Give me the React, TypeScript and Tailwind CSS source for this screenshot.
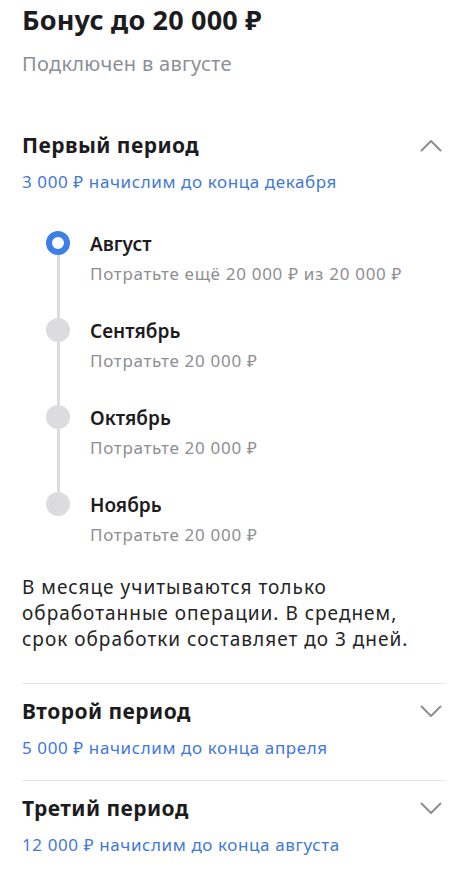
const months = [
  { name: 'Август', note: 'Потратьте ещё 20 000 ₽ из 20 000 ₽', active: true },
  { name: 'Сентябрь', note: 'Потратьте 20 000 ₽', active: false },
  { name: 'Октябрь', note: 'Потратьте 20 000 ₽', active: false },
  { name: 'Ноябрь', note: 'Потратьте 20 000 ₽', active: false },
]

function Chevron({ up }: { up?: boolean }) {
  return (
    <svg width="22" height="13" viewBox="0 0 22 13" fill="none" className="mr-[3px] shrink-0">
      <path
        d={up ? 'M1.5 11.5 11 2l9.5 9.5' : 'M1.5 1.5 11 11l9.5-9.5'}
        stroke="#8e8e93"
        strokeWidth="2"
        strokeLinecap="round"
        strokeLinejoin="round"
      />
    </svg>
  )
}

function PeriodHeader({ title, accrual, open }: { title: string; accrual: string; open?: boolean }) {
  return (
    <div>
      <div className="flex items-center justify-between">
        <h3 className="text-[21px] leading-[28px] font-bold tracking-[0.45px] text-[#1c1c1e]">{title}</h3>
        <Chevron up={open} />
      </div>
      <p className="mt-[12px] text-[17px] leading-[22px] tracking-[0.6px] text-[#3f78dc]">{accrual}</p>
    </div>
  )
}

export default function App() {
  return (
    <div className="min-h-[877px] w-[467px] bg-white px-[22px] pt-[4px] font-['Noto_Sans',sans-serif] antialiased">
      {/* Header */}
      <h1 className="text-[27px] leading-[32px] font-bold tracking-[0.2px] text-[#1c1c1e]">Бонус до 20 000 ₽</h1>
      <p className="mt-[16px] text-[20px] leading-[24px] tracking-[0.3px] text-[#8c8f96]">Подключен в августе</p>

      {/* First period, expanded */}
      <div className="mt-[55px]">
        <PeriodHeader title="Первый период" accrual="3 000 ₽ начислим до конца декабря" open />
      </div>

      <div className="mt-[38px] ml-[24px]">
        {months.map((m, i) => {
          const last = i === months.length - 1
          return (
            <div key={m.name} className="flex">
              <div className="flex w-[24px] shrink-0 flex-col items-center">
                {m.active ? (
                  <div className="h-[24px] w-[24px] rounded-full border-[6px] border-[#3d7fe8] bg-white" />
                ) : (
                  <div className="h-[24px] w-[24px] rounded-full bg-[#dcdce0]" />
                )}
                {!last && <div className="w-[3px] flex-1 bg-[#dcdce0]" />}
              </div>
              <div className={`ml-[20px] pt-[1px] ${last ? '' : 'pb-[33px]'}`}>
                <p className="text-[19px] leading-[24px] font-semibold text-[#1c1c1e]">{m.name}</p>
                <p className="mt-[7px] text-[17px] leading-[22px] tracking-[0.7px] text-[#8e8e93]">{m.note}</p>
              </div>
            </div>
          )
        })}
      </div>

      <p className="mt-[28px] text-[19px] leading-[26px] tracking-[1px] text-[#242424]">
        В месяце учитываются только обработанные операции. В среднем, срок обработки составляет до 3 дней.
      </p>

      {/* Collapsed periods */}
      <div className="mt-[31px] border-t border-[#e4e4e7] pt-[13px] pb-[21px]">
        <PeriodHeader title="Второй период" accrual="5 000 ₽ начислим до конца апреля" />
      </div>
      <div className="border-t border-[#e4e4e7] pt-[13px] pb-[21px]">
        <PeriodHeader title="Третий период" accrual="12 000 ₽ начислим до конца августа" />
      </div>
    </div>
  )
}
